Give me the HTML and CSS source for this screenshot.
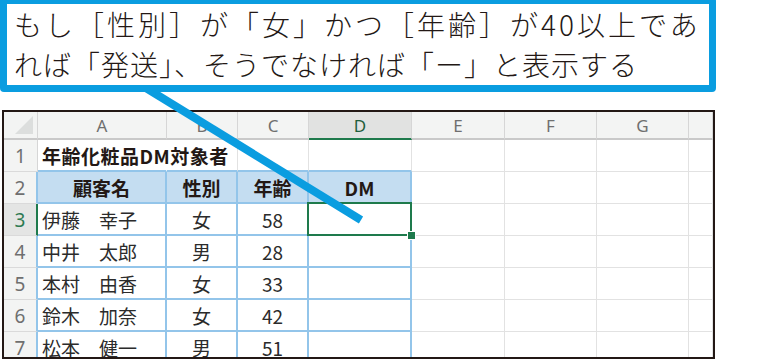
FILE: index.html
```html
<!DOCTYPE html>
<html lang="ja">
<head>
    <meta charset="UTF-8">
    <meta name="viewport" content="width=device-width, initial-scale=1.0">
    <title>IF関数の例</title>
    <link rel="stylesheet" href="styles.css">
</head>
<body>
    <div class="page">
        <div class="callout">
            <div class="line line-first">もし［性別］が「女」かつ［年齢］が40以上であ</div>
            <div class="line line-second">れば「発送」、そうでなければ「ー」と表示する</div>
        </div>

        <div class="sheet">
            <!-- column headers -->
            <div class="cell corner"></div>
            <div class="cell col-head">A</div>
            <div class="cell col-head">B</div>
            <div class="cell col-head">C</div>
            <div class="cell col-head active">D</div>
            <div class="cell col-head">E</div>
            <div class="cell col-head">F</div>
            <div class="cell col-head">G</div>
            <div class="cell col-head"></div>

            <!-- row 1 -->
            <div class="cell row-head">1</div>
            <div class="cell title above-table no-right">年齢化粧品DM対象者</div>
            <div class="cell above-table"></div>
            <div class="cell above-table"></div>
            <div class="cell above-table"></div>
            <div class="cell"></div>
            <div class="cell"></div>
            <div class="cell"></div>
            <div class="cell"></div>

            <!-- row 2 -->
            <div class="cell row-head blue-edge">2</div>
            <div class="cell table-head">顧客名</div>
            <div class="cell table-head">性別</div>
            <div class="cell table-head">年齢</div>
            <div class="cell table-head">DM</div>
            <div class="cell"></div>
            <div class="cell"></div>
            <div class="cell"></div>
            <div class="cell"></div>

            <!-- row 3 -->
            <div class="cell row-head active">3</div>
            <div class="cell table-cell name">伊藤　幸子</div>
            <div class="cell table-cell center">女</div>
            <div class="cell table-cell center">58</div>
            <div class="cell table-cell selected"></div>
            <div class="cell"></div>
            <div class="cell"></div>
            <div class="cell"></div>
            <div class="cell"></div>

            <!-- row 4 -->
            <div class="cell row-head blue-edge">4</div>
            <div class="cell table-cell name">中井　太郎</div>
            <div class="cell table-cell center">男</div>
            <div class="cell table-cell center">28</div>
            <div class="cell table-cell"></div>
            <div class="cell"></div>
            <div class="cell"></div>
            <div class="cell"></div>
            <div class="cell"></div>

            <!-- row 5 -->
            <div class="cell row-head blue-edge">5</div>
            <div class="cell table-cell name">本村　由香</div>
            <div class="cell table-cell center">女</div>
            <div class="cell table-cell center">33</div>
            <div class="cell table-cell"></div>
            <div class="cell"></div>
            <div class="cell"></div>
            <div class="cell"></div>
            <div class="cell"></div>

            <!-- row 6 -->
            <div class="cell row-head blue-edge">6</div>
            <div class="cell table-cell name">鈴木　加奈</div>
            <div class="cell table-cell center">女</div>
            <div class="cell table-cell center">42</div>
            <div class="cell table-cell"></div>
            <div class="cell"></div>
            <div class="cell"></div>
            <div class="cell"></div>
            <div class="cell"></div>

            <!-- row 7 -->
            <div class="cell row-head blue-edge">7</div>
            <div class="cell table-cell name">松本　健一</div>
            <div class="cell table-cell center">男</div>
            <div class="cell table-cell center">51</div>
            <div class="cell table-cell"></div>
            <div class="cell"></div>
            <div class="cell"></div>
            <div class="cell"></div>
            <div class="cell"></div>
        </div>

        <!-- pointer from the callout to cell D3 -->
        <svg class="pointer" width="783" height="360" viewBox="0 0 783 360">
            <line x1="128" y1="77" x2="361" y2="220" stroke="#0a9de0" stroke-width="8"/>
        </svg>
    </div>
</body>
</html>
```

FILE: styles.css
```css
body {
    margin: 0;
    background: #fff;
    font-family: "Noto Sans CJK JP", "Noto Sans", sans-serif;
    color: #231815;
}

.page {
    position: relative;
    width: 783px;
    height: 360px;
    overflow: hidden;
}

.callout {
    position: relative;
    z-index: 2;
    box-sizing: border-box;
    width: 716px;
    height: 95px;
    margin-top: -3px;
    padding-left: 7px;
    border: 7px solid #0a9de0;
    border-radius: 4px;
    background: #fff;
    font-size: 28px;
    font-weight: 300;
    line-height: 40px;
    white-space: nowrap;
}

.line-first {
    letter-spacing: 3px;
}

.line-second {
    letter-spacing: 1px;
}

.sheet {
    box-sizing: border-box;
    width: 713px;
    height: 249px;
    margin: 18px 0 0 2px;
    border: 2px solid #231815;
    overflow: hidden;
    display: grid;
    grid-template-columns: 34px 129px 71px 71px 103px 93px 92px 92px 1fr;
    grid-template-rows: 28px repeat(7, 32px);
    font-size: 19px;
}

.cell {
    box-sizing: border-box;
    display: flex;
    align-items: center;
    border-right: 1px solid #e2e2e2;
    border-bottom: 1px solid #e2e2e2;
    white-space: nowrap;
}

.corner {
    position: relative;
    background: #f3f4f3;
    border-right: 1px solid #d6d6d6;
    border-bottom: 2px solid #c9c9c9;
}

.corner::after {
    content: "";
    position: absolute;
    right: 4px;
    bottom: 4px;
    border-style: solid;
    border-width: 0 0 18px 18px;
    border-color: transparent transparent #dcdedd transparent;
}

.col-head {
    justify-content: center;
    background: #f3f4f3;
    border-right: 1px solid #d6d6d6;
    border-bottom: 2px solid #c9c9c9;
    color: #6f6f6f;
    font-family: "Noto Sans", sans-serif;
    font-size: 17px;
}

.col-head.active {
    background: #e1e2e1;
    border-bottom: 2px solid #1e7a4c;
    color: #1f5e3c;
}

.row-head {
    justify-content: center;
    background: #f3f4f3;
    border-right: 1px solid #d6d6d6;
    border-bottom: 1px solid #dadada;
    color: #6f6f6f;
    font-family: "Noto Sans", sans-serif;
}

.row-head.blue-edge {
    border-right: 2px solid #93c5ea;
}

.row-head.active {
    background: #e4e5e4;
    border-right: 2px solid #1e7a4c;
    color: #2d7a52;
}

.title {
    padding-left: 4px;
    font-weight: bold;
    letter-spacing: 0.5px;
    overflow: visible;
}

.no-right {
    border-right-color: transparent;
}

.above-table {
    border-bottom: 2px solid #93c5ea;
}

.table-head {
    justify-content: center;
    background: #c4ddf1;
    border-right: 2px solid #93c5ea;
    border-bottom: 2px solid #93c5ea;
    font-weight: bold;
}

.table-cell {
    border-right: 2px solid #93c5ea;
    border-bottom: 2px solid #93c5ea;
    color: #2b2b2b;
}

.name {
    padding-left: 4px;
}

.center {
    justify-content: center;
}

.selected {
    position: relative;
}

.selected::before {
    content: "";
    position: absolute;
    left: -2px;
    top: -2px;
    right: -2px;
    bottom: -2px;
    border: 2px solid #1e7a4c;
}

.selected::after {
    content: "";
    position: absolute;
    right: -6px;
    bottom: -6px;
    width: 7px;
    height: 7px;
    background: #1e7a4c;
    border: 1px solid #fff;
}

.pointer {
    position: absolute;
    left: 0;
    top: 0;
    z-index: 1;
}
```
